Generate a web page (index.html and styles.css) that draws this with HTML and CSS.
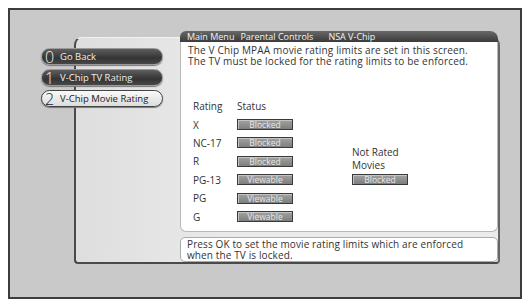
FILE: index.html
```html
<!DOCTYPE html>
<html lang="en">
<head>
  <meta charset="UTF-8">
  <title>V-Chip Movie Rating</title>
  <link rel="stylesheet" href="styles.css">
</head>
<body>
  <div class="screen">
    <div class="panel">
      <div class="menu">
        <div class="menu-item"><span class="num">0</span>Go Back</div>
        <div class="menu-item"><span class="num">1</span>V-Chip TV Rating</div>
        <div class="menu-item selected"><span class="num">2</span>V-Chip Movie Rating</div>
      </div>
      <div class="main">
        <div class="title-bar">
          <span>Main Menu</span><span>Parental Controls</span><span class="last">NSA V-Chip</span>
        </div>
        <div class="content">
          <p class="intro">The V Chip MPAA movie rating limits are set in this screen.<br>
          The TV must be locked for the rating limits to be enforced.</p>
          <div class="ratings">
            <div class="rating-grid">
              <div class="head">Rating</div><div class="head">Status</div>
              <div>X</div><div><span class="status">Blocked</span></div>
              <div>NC-17</div><div><span class="status">Blocked</span></div>
              <div>R</div><div><span class="status">Blocked</span></div>
              <div>PG-13</div><div><span class="status">Viewable</span></div>
              <div>PG</div><div><span class="status">Viewable</span></div>
              <div>G</div><div><span class="status">Viewable</span></div>
            </div>
            <div class="not-rated">
              <div>Not Rated</div>
              <div>Movies</div>
              <span class="status">Blocked</span>
            </div>
          </div>
        </div>
        <div class="help">
          Press OK to set the movie rating limits which are enforced<br>
          when the TV is locked.
        </div>
      </div>
    </div>
  </div>
</body>
</html>
```

FILE: styles.css
```css
body {
  margin: 0;
  padding: 8px 7px 0 8px;
  background: #fff;
  font-family: "Open Sans", sans-serif;
  color: #333;
}

.screen {
  width: 514px;
  height: 291px;
  box-sizing: border-box;
  border: 2px solid #3c3c3c;
  background: #c9c9c9;
  padding: 27px 0 0 64px;
}

.panel {
  width: 426px;
  height: 227px;
  box-sizing: border-box;
  display: flex;
  background: linear-gradient(to right, #dedede, #ebebeb 40%);
  border-top: 1px solid #f2f2f2;
  border-left: 2px solid #4a4a4a;
  border-bottom: 2px solid #4a4a4a;
  border-right: 2px solid #666;
  border-radius: 8px 8px 4px 4px;
}

.menu {
  margin: 10px 0 0 -35px;
  width: 122px;
  display: flex;
  flex-direction: column;
  gap: 4px;
}

.menu-item {
  height: 17px;
  box-sizing: border-box;
  display: flex;
  align-items: center;
  border: 1px solid #9a9a9a;
  border-radius: 9px;
  background: linear-gradient(#5e5e5e, #343434 60%, #474747);
  color: #f0f0f0;
  font-size: 9.5px;
  box-shadow: 0 1px 1px #777;
  white-space: nowrap;
}

.menu-item .num {
  font-size: 16px;
  font-weight: 300;
  width: 13px;
  text-align: center;
  margin: 0 4px 0 1px;
  line-height: 1;
}

.menu-item.selected {
  background: linear-gradient(#fafafa, #dcdcdc);
  border: 1px solid #444;
  color: #222;
}

.main {
  margin: -7px 0 0 17px;
  width: 318px;
  display: flex;
  flex-direction: column;
}

.title-bar {
  height: 11px;
  background: linear-gradient(#686868, #3a3a3a);
  border-radius: 6px 8px 0 0;
  color: #f4f4f4;
  font-size: 9px;
  line-height: 11px;
  padding-left: 7px;
  white-space: nowrap;
}

.title-bar span {
  margin-right: 6px;
}

.title-bar .last {
  margin-left: 9px;
}

.content {
  height: 190px;
  box-sizing: border-box;
  background: #fff;
  border: 1px solid #b8b8b8;
  border-top: none;
  border-radius: 0 0 6px 6px;
  padding: 3px 7px;
  font-size: 10px;
}

.intro {
  margin: 0;
  line-height: 11px;
  letter-spacing: 0.17px;
}

.ratings {
  display: flex;
  margin: 30px 0 0 5px;
}

.rating-grid {
  display: grid;
  grid-template-columns: 44px 56px;
  grid-auto-rows: 18.4px;
  align-items: center;
}

.status {
  display: block;
  width: 56px;
  height: 11px;
  box-sizing: border-box;
  border: 1px solid #3a3a3a;
  background: linear-gradient(#a2a2a2, #7e7e7e);
  box-shadow: inset 1px 1px 0 #c4c4c4;
  color: #e8e8e8;
  font-size: 8.5px;
  line-height: 9px;
  text-align: center;
}

.not-rated {
  margin: 49px 0 0 59px;
  line-height: 12.5px;
}

.not-rated .status {
  margin-top: 3px;
}

.help {
  margin-top: 5px;
  height: 25px;
  box-sizing: border-box;
  background: #fff;
  border: 1px solid #aaa;
  border-radius: 5px;
  padding: 1px 6px;
  font-size: 10px;
  line-height: 10.5px;
  letter-spacing: 0.12px;
}
```
